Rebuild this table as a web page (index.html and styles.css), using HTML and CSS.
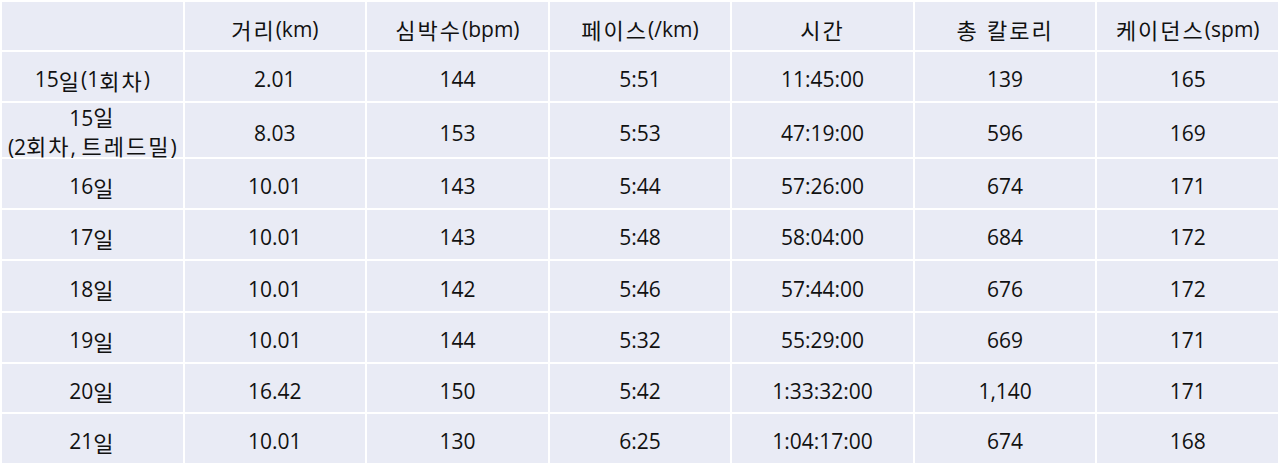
FILE: index.html
```html
<!DOCTYPE html>
<html lang="ko">
<head>
<meta charset="utf-8">
<link rel="stylesheet" href="styles.css">
</head>
<body>
<div class="table">
  <div class="cell"></div>
  <div class="cell"><span class="ko">거리</span>(km)</div>
  <div class="cell"><span class="ko">심박수</span>(bpm)</div>
  <div class="cell"><span class="ko">페이스</span>(/km)</div>
  <div class="cell"><span class="ko">시간</span></div>
  <div class="cell"><span class="ko">총 칼로리</span></div>
  <div class="cell"><span class="ko">케이던스</span>(spm)</div>

  <div class="cell">15<span class="ko">일</span>(1<span class="ko">회차</span>)</div>
  <div class="cell">2.01</div>
  <div class="cell">144</div>
  <div class="cell">5:51</div>
  <div class="cell">11:45:00</div>
  <div class="cell">139</div>
  <div class="cell">165</div>

  <div class="cell two">15<span class="ko">일</span><br>(2<span class="ko">회차</span>, <span class="ko">트레드밀</span>)</div>
  <div class="cell">8.03</div>
  <div class="cell">153</div>
  <div class="cell">5:53</div>
  <div class="cell">47:19:00</div>
  <div class="cell">596</div>
  <div class="cell">169</div>

  <div class="cell">16<span class="ko">일</span></div>
  <div class="cell">10.01</div>
  <div class="cell">143</div>
  <div class="cell">5:44</div>
  <div class="cell">57:26:00</div>
  <div class="cell">674</div>
  <div class="cell">171</div>

  <div class="cell">17<span class="ko">일</span></div>
  <div class="cell">10.01</div>
  <div class="cell">143</div>
  <div class="cell">5:48</div>
  <div class="cell">58:04:00</div>
  <div class="cell">684</div>
  <div class="cell">172</div>

  <div class="cell">18<span class="ko">일</span></div>
  <div class="cell">10.01</div>
  <div class="cell">142</div>
  <div class="cell">5:46</div>
  <div class="cell">57:44:00</div>
  <div class="cell">676</div>
  <div class="cell">172</div>

  <div class="cell">19<span class="ko">일</span></div>
  <div class="cell">10.01</div>
  <div class="cell">144</div>
  <div class="cell">5:32</div>
  <div class="cell">55:29:00</div>
  <div class="cell">669</div>
  <div class="cell">171</div>

  <div class="cell">20<span class="ko">일</span></div>
  <div class="cell">16.42</div>
  <div class="cell">150</div>
  <div class="cell">5:42</div>
  <div class="cell">1:33:32:00</div>
  <div class="cell">1,140</div>
  <div class="cell">171</div>

  <div class="cell">21<span class="ko">일</span></div>
  <div class="cell">10.01</div>
  <div class="cell">130</div>
  <div class="cell">6:25</div>
  <div class="cell">1:04:17:00</div>
  <div class="cell">674</div>
  <div class="cell">168</div>
</div>
</body>
</html>
```

FILE: styles.css
```css
html, body {
  margin: 0;
  padding: 0;
  background: #ffffff;
}

.table {
  width: 1280px;
  box-sizing: border-box;
  display: grid;
  grid-template-columns: repeat(7, 1fr);
  grid-template-rows: 48px 49px 54px 49px 49px 50px 49px 48px 49px;
  gap: 2px;
  padding: 2px;
  background: #ffffff;
  font-family: "Open Sans", "Noto Sans CJK KR", sans-serif;
  font-size: 21px;
  color: #111111;
}

.cell {
  background: #e9ebf5;
  display: flex;
  align-items: center;
  justify-content: center;
  text-align: center;
  line-height: 1.2;
  padding-top: 7px;
  box-sizing: border-box;
  white-space: nowrap;
}

.cell.two {
  display: block;
  line-height: 27px;
  padding-top: 0;
}

.ko {
  font-family: "Noto Sans CJK KR", sans-serif;
  font-size: 22px;
  font-weight: 400;
  letter-spacing: 2px;
}
```
